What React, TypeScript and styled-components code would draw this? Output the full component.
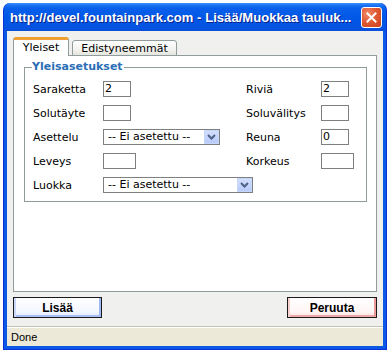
import React from "react";
import styled, { createGlobalStyle } from "styled-components";

const Global = createGlobalStyle`
  html, body { margin: 0; padding: 0; background: #ffffff; }
  body { width: 390px; height: 353px; overflow: hidden; }
  * { box-sizing: border-box; }
`;

const Page = styled.div`
  width: 390px;
  height: 353px;
  padding: 3px 3px 3px 3px;
  background: #ffffff;
`;

const Window = styled.div`
  width: 384px;
  height: 347px;
  display: flex;
  flex-direction: column;
  background: #0a58e4;
  border-radius: 7px 7px 0 0;
  border: 1px solid #0831d9;
  border-top: none;
`;

const TitleBar = styled.div`
  height: 28px;
  flex: none;
  display: flex;
  align-items: center;
  padding: 0 4px 0 6px;
  border-radius: 7px 7px 0 0;
  background: linear-gradient(
    #3c95ff 0px,
    #1d74f5 2px,
    #0a60ea 5px,
    #0058e6 50%,
    #0454e2 85%,
    #0a4fd8 100%
  );
`;

const TitleText = styled.div`
  flex: 1;
  min-width: 0;
  color: #ffffff;
  font-family: "Liberation Sans", Arial, sans-serif;
  font-weight: bold;
  font-size: 13px;
  letter-spacing: 0.05px;
  white-space: nowrap;
  overflow: hidden;
  text-shadow: 1px 1px 0 #0a1f8a;
`;

const CloseButton = styled.div`
  width: 21px;
  height: 21px;
  flex: none;
  border: 1px solid #ffffff;
  border-radius: 3px;
  background: radial-gradient(circle at 30% 30%, #f08a6a 0, #e05a34 45%, #c8401c 100%);
  display: flex;
  align-items: center;
  justify-content: center;
`;

const Frame = styled.div`
  flex: 1;
  display: flex;
  flex-direction: column;
  padding: 0 3px 3px 3px;
`;

const Dialog = styled.div`
  flex: 1;
  background: #f0f0ee;
  padding: 7px 6px 0 6px;
  display: flex;
  flex-direction: column;
  font-family: "DejaVu Sans", Verdana, sans-serif;
  font-size: 11px;
  color: #000000;
`;

const Tabs = styled.div`
  height: 18px;
  display: flex;
  align-items: flex-end;
  gap: 3px;
  margin-bottom: -1px;
  position: relative;
  z-index: 1;
`;

const Tab = styled.div<{ $active?: boolean }>`
  height: ${(p) => (p.$active ? "19px" : "16px")};
  width: ${(p) => (p.$active ? "56px" : "105px")};
  border: 1px solid #919b9c;
  border-bottom: ${(p) => (p.$active ? "none" : "1px solid #919b9c")};
  border-top: ${(p) => (p.$active ? "3px solid #f0a030" : "1px solid #919b9c")};
  border-radius: 3px 3px 0 0;
  background: ${(p) =>
    p.$active ? "#ffffff" : "linear-gradient(#ffffff, #f2f2ef 60%, #e6e6e0)"};
  display: flex;
  align-items: center;
  justify-content: center;
  padding-bottom: ${(p) => (p.$active ? "2px" : "0")};
  line-height: 13px;
`;

const Panel = styled.div`
  height: 237px;
  border: 1px solid #919b9c;
  background: #ffffff;
  padding: 4px 9px 0 10px;
`;

const Fieldset = styled.fieldset`
  margin: 0;
  border: 1px solid #919b9c;
  padding: 3px 8px 4px 7px;
  min-width: 0;
`;

const Legend = styled.legend`
  padding: 0 1px 0 0;
  line-height: 14px;
  font-weight: bold;
  color: #2b6fb6;
`;

const Grid = styled.div`
  display: grid;
  grid-template-columns: 71px 142px 76px 1fr;
  grid-auto-rows: 24px;
  align-items: center;
`;

const Label = styled.div`
  padding-left: 1px;
  white-space: nowrap;
`;

const TextInput = styled.div<{ $w: number }>`
  width: ${(p) => p.$w}px;
  height: 16px;
  border: 1px solid #7f7f7f;
  background: #ffffff;
  padding-left: 1px;
  line-height: 14px;
`;

const SelectBox = styled.div<{ $w: number; $span?: boolean }>`
  width: ${(p) => p.$w}px;
  height: 16px;
  border: 1px solid #7f7f7f;
  background: #ffffff;
  display: flex;
  align-items: center;
  grid-column: ${(p) => (p.$span ? "2 / span 3" : "auto")};
`;

const SelectText = styled.div`
  flex: 1;
  padding-left: 4px;
  line-height: 14px;
  white-space: nowrap;
  overflow: hidden;
`;

const Arrow = styled.div`
  width: 15px;
  height: 14px;
  flex: none;
  border: 1px solid #c6d7fc;
  background: linear-gradient(#d2defe, #b8cbfa);
  display: flex;
  align-items: center;
  justify-content: center;
`;

const Buttons = styled.div`
  margin-top: 5px;
  height: 21px;
  display: flex;
  justify-content: space-between;
`;

const Button = styled.div<{ $tone: "blue" | "red"; $w: number }>`
  width: ${(p) => p.$w}px;
  height: 21px;
  border: 1px solid #1a1a1a;
  display: flex;
  align-items: center;
  justify-content: center;
  font-family: "Liberation Sans", Arial, sans-serif;
  font-weight: bold;
  font-size: 12px;
  background: ${(p) =>
    p.$tone === "blue"
      ? "linear-gradient(#ffffff, #f4f7ff 70%, #dfe8ff)"
      : "linear-gradient(#ffffff, #fff6f6 70%, #fbe0e0)"};
  box-shadow: ${(p) =>
    p.$tone === "blue"
      ? "inset 2px 0 0 #c9d8fb, inset -2px 0 0 #9fb8f3, inset 0 -2px 0 #a9c0f5"
      : "inset 2px 0 0 #f7d0d0, inset -2px 0 0 #ec9a9a, inset 0 -2px 0 #efa8a8"};
`;

const StatusBar = styled.div`
  height: 20px;
  flex: none;
  background: #ece9d8;
  border-top: 1px solid #c5c2b2;
  box-shadow: inset 0 1px 0 #ffffff;
  display: flex;
  align-items: center;
  padding-left: 4px;
  font-family: "Liberation Sans", Arial, sans-serif;
  font-size: 11px;
  color: #000000;
`;

const ChevronIcon = () => (
  <svg width="9" height="6" viewBox="0 0 9 6">
    <path d="M1 1 L4.5 4.5 L8 1" fill="none" stroke="#4d6185" strokeWidth="2" />
  </svg>
);

const CloseIcon = () => (
  <svg width="11" height="11" viewBox="0 0 11 11">
    <path d="M1.5 1.5 L9.5 9.5 M9.5 1.5 L1.5 9.5" stroke="#ffffff" strokeWidth="2" strokeLinecap="square" />
  </svg>
);

const Select = ({ w, span }: { w: number; span?: boolean }) => (
  <SelectBox $w={w} $span={span}>
    <SelectText>-- Ei asetettu --</SelectText>
    <Arrow>
      <ChevronIcon />
    </Arrow>
  </SelectBox>
);

export default function App() {
  return (
    <>
      <Global />
      <Page>
        <Window>
          <TitleBar>
            <TitleText>http://devel.fountainpark.com - Lisää/Muokkaa tauluk...</TitleText>
            <CloseButton>
              <CloseIcon />
            </CloseButton>
          </TitleBar>
          <Frame>
            <Dialog>
              <Tabs>
                <Tab $active>Yleiset</Tab>
                <Tab>Edistyneemmät</Tab>
              </Tabs>
              <Panel>
                <Fieldset>
                  <Legend>Yleisasetukset</Legend>
                  <Grid>
                    <Label>Saraketta</Label>
                    <div><TextInput $w={28}>2</TextInput></div>
                    <Label>Riviä</Label>
                    <div><TextInput $w={28}>2</TextInput></div>

                    <Label>Solutäyte</Label>
                    <div><TextInput $w={28} /></div>
                    <Label>Soluvälitys</Label>
                    <div><TextInput $w={28} /></div>

                    <Label>Asettelu</Label>
                    <div><Select w={117} /></div>
                    <Label>Reuna</Label>
                    <div><TextInput $w={28}>0</TextInput></div>

                    <Label>Leveys</Label>
                    <div><TextInput $w={33} /></div>
                    <Label>Korkeus</Label>
                    <div><TextInput $w={33} /></div>

                    <Label>Luokka</Label>
                    <Select w={150} span />
                  </Grid>
                </Fieldset>
              </Panel>
              <Buttons>
                <Button $tone="blue" $w={89}>Lisää</Button>
                <Button $tone="red" $w={90}>Peruuta</Button>
              </Buttons>
            </Dialog>
            <StatusBar>Done</StatusBar>
          </Frame>
        </Window>
      </Page>
    </>
  );
}
